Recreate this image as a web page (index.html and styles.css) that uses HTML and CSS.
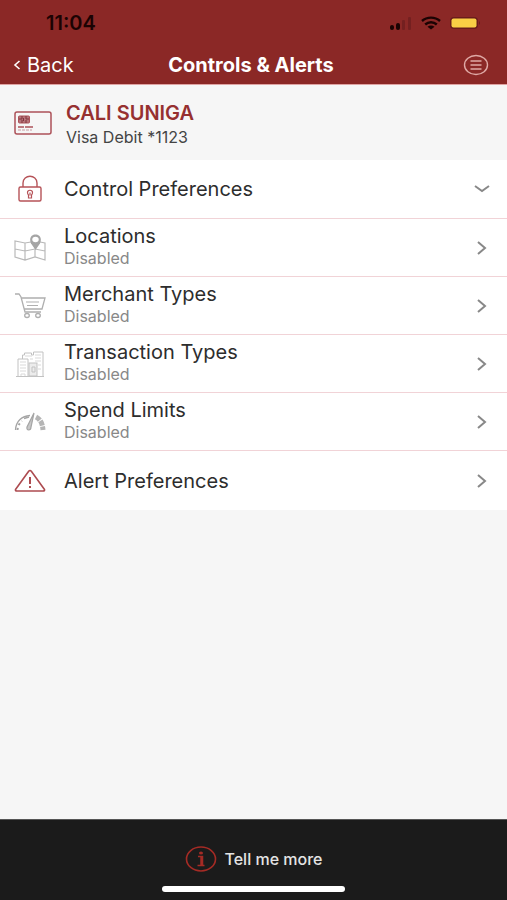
FILE: index.html
```html
<!DOCTYPE html>
<html lang="en">
<head>
    <meta charset="UTF-8">
    <meta name="viewport" content="width=device-width, initial-scale=1.0">
    <title>Controls & Alerts</title>
    <link rel="stylesheet" href="styles.css">
</head>
<body>
    <!-- Status bar and navigation -->
    <header class="header">
        <div class="status-bar">
            <span class="time">11:04</span>
            <div class="status-icons">
                <svg width="24" height="14" viewBox="0 0 24 14">
                    <rect x="1" y="9" width="4" height="5" rx="2" fill="#1b0303"/>
                    <rect x="7" y="7" width="4" height="7" rx="2" fill="#1b0303"/>
                    <rect x="13" y="4" width="3" height="10" rx="1" fill="#742020"/>
                    <rect x="19" y="1" width="3" height="13" rx="1" fill="#742020"/>
                </svg>
                <svg width="20" height="14" viewBox="0 0 20 14" fill="none" stroke="#1b0303" stroke-width="2.4">
                    <path d="M1 5C6 .5 14 .5 19 5M4.200 8.500C7.500 5.500 12.500 5.500 15.800 8.500"/>
                    <path d="M6.500 10.700C8.500 9 11.500 9 13.500 10.700L10 13.500Z" fill="#1b0303" stroke="none"/>
                </svg>
                <svg width="32" height="14" viewBox="0 0 32 14">
                    <rect x="1" y="1" width="28" height="12" rx="4" fill="#6a1c1b"/>
                    <rect x="2.500" y="2.500" width="25" height="9" rx="2" fill="#f9cf45"/>
                    <path d="M30 5q2 2 0 4z" fill="#6a1c1b"/>
                </svg>
            </div>
        </div>
        <nav class="nav-bar">
            <a class="back" href="#">
                <svg width="8" height="10" viewBox="0 0 8 10" fill="none" stroke="#fff" stroke-width="1.6"><path d="M6.500 1L2 5l4.500 4"/></svg>
                Back
            </a>
            <h1>Controls & Alerts</h1>
            <button class="menu-btn" aria-label="Menu">
                <svg width="26" height="22" viewBox="0 0 26 22" fill="none" stroke="#dfa9a5" stroke-width="1.4">
                    <ellipse cx="13" cy="11" rx="11.500" ry="9.500"/>
                    <path d="M7.500 7h11M7.500 11h11M7.500 15h11"/>
                </svg>
            </button>
        </nav>
    </header>

    <!-- Card Section -->
    <section class="card">
        <svg class="icon" width="38" height="26" viewBox="0 0 38 26" fill="none" stroke="#ad5259">
            <rect x="1" y="2" width="36" height="22" rx="2" stroke-width="1.5"/>
            <rect x="4.500" y="6" width="11" height="7" rx="1" fill="#b7747b"/>
            <path d="M8 6v3H5M8 13v-3M12 6v3h3M12 13v-3M9.500 8v3" stroke="#81343c"/>
            <path d="M4 17h6M11 17h8" stroke-width="1.4"/>
            <path d="M4 20h14" stroke="#c99aa0" stroke-dasharray="3 1"/>
        </svg>
        <div class="card-text">
            <h2>CALI SUNIGA</h2>
            <p>Visa Debit *1123</p>
        </div>
    </section>

    <!-- Preferences List -->
    <main class="list">
        <button class="row">
            <svg class="icon" width="38" height="30" viewBox="0 0 38 30" fill="none" stroke="#b65358" stroke-width="1.4">
                <rect x="5" y="13" width="22" height="14" rx="1.500"/>
                <path d="M9 13V9c0-9 14-9 14 0v4"/>
                <path d="M13.500 18.500c0-3 5-3 5 0 0 1-.500 2-1 2.500v3h-3v-3c-.500-.500-1-1.500-1-2.500zM16 18.500v3" stroke-width="1.200"/>
            </svg>
            <span class="label">Control Preferences</span>
            <svg class="arrow" width="18" height="16" viewBox="0 0 18 16"><path d="M2 5l7 5 7-5"/></svg>
        </button>

        <button class="row">
            <svg class="icon" width="38" height="30" viewBox="0 0 38 30" fill="none" stroke="#b9b9b9">
                <path d="M17 9l-6 1-10-2v16l10 3 10-3 10 3V10l-5-1M1 16l10 2 10-2 10 2M11 10v17M21 17v7" stroke-width="1.200"/>
                <path d="M21.500 17l-4.500-6.500C12-1.500 31-1.500 26 10.500z" fill="#a5a5a5" stroke="none"/>
                <ellipse cx="21.500" cy="6.500" rx="3.200" ry="2.800" fill="#fff" stroke="none"/>
            </svg>
            <span class="label with-status">Locations<small>Disabled</small></span>
            <svg class="arrow" width="18" height="16" viewBox="0 0 18 16"><path d="M5 2l7 6-7 6"/></svg>
        </button>

        <button class="row">
            <svg class="icon" width="38" height="30" viewBox="0 0 38 30" fill="none" stroke="#afafaf" stroke-width="1.3">
                <path d="M1 3h4l2 3 4 15h16M7 7h24l-3 11H10"/>
                <path d="M12 11h13M13 14.500h11" stroke-width="1.100"/>
                <ellipse cx="13" cy="24.500" rx="2.300" ry="2"/>
                <ellipse cx="24" cy="24.500" rx="2.300" ry="2"/>
            </svg>
            <span class="label with-status">Merchant Types<small>Disabled</small></span>
            <svg class="arrow" width="18" height="16" viewBox="0 0 18 16"><path d="M5 2l7 6-7 6"/></svg>
        </button>

        <button class="row">
            <svg class="icon" width="38" height="30" viewBox="0 0 38 30" fill="none" stroke="#c2c2c2">
                <path d="M2 27.500h28M4 27V10h10v17M8.500 10V6h2V4h7v2h2V3H29v24"/>
                <path d="M6 13h6M6 16h6M6 19h6M6 22h6M7 27v-2h4v2M21 6h6M21 9h6M21 12h6M24 16h3M24 20h3M11 7h7M16 10h3" stroke="#d9d9d9"/>
                <rect x="15" y="14" width="8" height="13" fill="#ececec"/>
                <path d="M18 18h3v5h-3z"/>
            </svg>
            <span class="label with-status">Transaction Types<small>Disabled</small></span>
            <svg class="arrow" width="18" height="16" viewBox="0 0 18 16"><path d="M5 2l7 6-7 6"/></svg>
        </button>

        <button class="row">
            <svg class="icon" width="38" height="30" viewBox="0 0 38 30" fill="none" stroke="#a5a5a5">
                <path d="M1.500 23C2 14 8 9 16 8.500" stroke-width="1.300"/>
                <path d="M3.500 23c.400-4 2-7 4.500-9" stroke-width="2" stroke-dasharray="2 3"/>
                <path d="M10 11.500l5-1.500" stroke-width="1.500"/>
                <path d="M22 10c4 2 6.500 6 7 13" stroke-width="5" stroke="#b5b5b5" stroke-dasharray="5 1"/>
                <path d="M20 6l-7 14c-1 4 4 4 4 0z" fill="#c8c8c8" stroke-width="1.200"/>
            </svg>
            <span class="label with-status">Spend Limits<small>Disabled</small></span>
            <svg class="arrow" width="18" height="16" viewBox="0 0 18 16"><path d="M5 2l7 6-7 6"/></svg>
        </button>

        <button class="row">
            <svg class="icon" width="38" height="30" viewBox="0 0 38 30" fill="none" stroke="#ad4b50" stroke-width="1.600" stroke-linejoin="round">
                <path d="M14.500 5.500Q16 3.500 17.500 5.500L30.500 23.500Q31 25 29 25H3Q1 25 1.500 23.500Z"/>
                <path d="M16 11v7M16 20v2" stroke-width="2"/>
            </svg>
            <span class="label">Alert Preferences</span>
            <svg class="arrow" width="18" height="16" viewBox="0 0 18 16"><path d="M5 2l7 6-7 6"/></svg>
        </button>
    </main>

    <footer class="footer">
        <button class="more-btn">
            <svg width="32" height="28" viewBox="0 0 32 28" fill="none" stroke="#a52b25">
                <ellipse cx="16" cy="14" rx="14.500" ry="12" stroke-width="1.600"/>
                <ellipse cx="16" cy="8" rx="2" ry="1.600" fill="#a52b25" stroke="none"/>
                <path d="M13 11.500h4.500V20M12.500 20.500h7" stroke-width="1.500"/>
                <path d="M16.500 12v8" stroke-width="2.500"/>
            </svg>
            Tell me more
        </button>
        <div class="home-bar"></div>
    </footer>
</body>
</html>
```

FILE: styles.css
```css
* {
    box-sizing: border-box;
}
body {
    font-family: Inter, "Liberation Sans", sans-serif;
    background: #f6f6f6;
    margin: 0;
    min-height: 100vh;
    display: flex;
    flex-direction: column;
}
h1, h2, p {
    margin: 0;
}
button {
    font-family: inherit;
    border: none;
    background: none;
    padding: 0;
    cursor: pointer;
}
svg {
    display: block;
    flex-shrink: 0;
}
.header {
    background: #8b2826;
    border-bottom: 1px solid #dfa4a3;
    color: white;
}
.status-bar {
    display: flex;
    justify-content: space-between;
    align-items: center;
    height: 46px;
    padding: 0 26px 0 46px;
}
.time {
    color: #1b0303;
    font-size: 20px;
    font-weight: 600;
}
.status-icons {
    display: flex;
    align-items: center;
    gap: 8px;
}
.nav-bar {
    display: grid;
    grid-template-columns: 1fr auto 1fr;
    align-items: center;
    height: 38px;
    padding: 0 18px 0 13px;
}
.back {
    display: flex;
    align-items: center;
    gap: 6px;
    color: white;
    font-size: 20px;
    text-decoration: none;
}
.nav-bar h1 {
    font-size: 20px;
    font-weight: 700;
}
.menu-btn {
    justify-self: end;
}

/* Card */
.card {
    display: flex;
    align-items: center;
    height: 75px;
    padding-left: 14px;
    gap: 14px;
}
.card-text {
    padding-top: 4px;
}
.card h2 {
    color: #963030;
    font-size: 20px;
    line-height: 25px;
    font-weight: 600;
}
.card p {
    color: #444;
    font-size: 16px;
    line-height: 22px;
}

/* List */
.list {
    background: white;
}
.row {
    display: flex;
    align-items: center;
    width: 100%;
    height: 58px;
    padding: 0 16px 0 14px;
    gap: 12px;
    text-align: left;
}
.row + .row {
    border-top: 1px solid #f1d3d7;
}
.row:last-child {
    height: 60px;
}
.label {
    flex: 1;
    color: #2d2d2d;
    font-size: 20px;
    line-height: 24px;
}
.label.with-status {
    padding-bottom: 4px;
}
.label small {
    display: block;
    color: #888;
    font-size: 16px;
    line-height: 20px;
}
.arrow {
    fill: none;
    stroke: #888;
    stroke-width: 2;
}

/* Footer */
.footer {
    display: flex;
    flex-direction: column;
    align-items: center;
    justify-content: flex-end;
    height: 81px;
    margin-top: auto;
    padding-bottom: 8px;
    gap: 13px;
    background: #1b1b1b;
    border-top: 1px solid #555;
}
.more-btn {
    display: flex;
    align-items: center;
    gap: 8px;
    color: #e4e4e4;
    font-size: 16px;
    font-weight: 500;
}
.home-bar {
    width: 36%;
    height: 6px;
    border-radius: 3px;
    background: white;
}
```
